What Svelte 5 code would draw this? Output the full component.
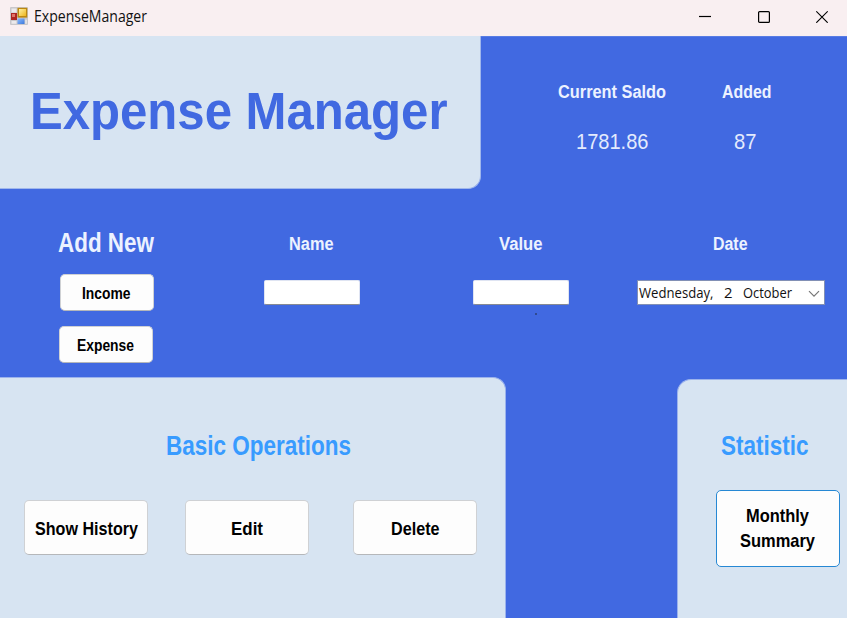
<script>
  const operations = [
    { text: 'Show History', width: 103, offset: 0 },
    { text: 'Edit', width: 32, offset: -1 },
    { text: 'Delete', width: 48.5, offset: -0.5 }
  ];
</script>

{#snippet label(text, width, size, height, baseline, kind)}
  <svg class="label {kind}" {width} {height} aria-label={text}>
    <text x="0" y={baseline} font-size={size} textLength={width} lengthAdjust="spacingAndGlyphs">{text}</text>
  </svg>
{/snippet}

<div class="window">
  <header class="titlebar">
    <svg class="appicon" width="18" height="18" viewBox="0 0 18 18">
      <defs>
        <linearGradient id="gold" x2="1" y2="1"><stop stop-color="#fff0a0" /><stop offset="1" stop-color="#eeb51c" /></linearGradient>
        <linearGradient id="sky" x2="1" y2="1"><stop stop-color="#8cbcff" /><stop offset="1" stop-color="#3c78dc" /></linearGradient>
      </defs>
      <rect width="18" height="18" rx="1" fill="#c9c7ca" />
      <path d="M1.5 1.5h5v4h-5zM1.5 14h5v2.7h-5zM15.3 12.7h1.5v4h-1.5z" fill="#eceaec" />
      <rect x="1" y="6" width="6" height="7" fill="#ad2622" />
      <rect x="2" y="7" width="3" height="3" fill="#df7468" />
      <rect x="7.5" y=".8" width="9.8" height="9.8" fill="#bd8710" />
      <rect x="9" y="2" width="7" height="7" fill="url(#gold)" />
      <rect x="7.5" y="11.5" width="7" height="5.5" fill="url(#sky)" />
    </svg>
    {@render label('ExpenseManager', 113, 15.4, 24, 16, 'system')}
    <div class="controls">
      <svg width="12" height="13" viewBox="0 0 12 13"><path d="M0 6.5h12" /></svg>
      <svg width="12" height="13" viewBox="0 0 12 13"><rect x=".6" y="1.6" width="10.8" height="10.8" rx="1" /></svg>
      <svg width="12" height="13" viewBox="0 0 12 13"><path d="M.3 1.3l11.4 11.4M11.7 1.3L.3 12.7" /></svg>
    </div>
  </header>

  <section class="hero">
    <div class="brand">{@render label('Expense Manager', 417.5, 51, 60, 48, 'bold royal')}</div>
    <div class="summary-top">
      <div class="stat saldo">
        {@render label('Current Saldo', 108, 18.7, 26, 18, 'bold pale')}
        {@render label('1781.86', 72.5, 21.3, 28, 20.5, 'thin')}
      </div>
      <div class="stat added">
        {@render label('Added', 49.5, 18.7, 26, 18, 'bold pale')}
        {@render label('87', 22.5, 21.3, 28, 20.5, 'thin')}
      </div>
    </div>
  </section>

  <section class="entry">
    <div class="add">
      {@render label('Add New', 96, 26.8, 32, 23, 'bold pale')}
      <button class="small income">{@render label('Income', 48.5, 16.4, 22, 16.5, 'bold')}</button>
      <button class="small">{@render label('Expense', 57, 16.4, 22, 16.5, 'bold')}</button>
    </div>
    <div class="field name">
      {@render label('Name', 44.5, 18, 24, 17.7, 'bold pale')}
      <input aria-label="Name" />
    </div>
    <div class="field value">
      {@render label('Value', 43.5, 18, 24, 17.7, 'bold pale')}
      <input aria-label="Value" />
      <i class="mark"></i>
    </div>
    <div class="field date">
      {@render label('Date', 34.5, 18, 24, 17.7, 'bold pale')}
      <div class="picker">
        {@render label('Wednesday,', 74.5, 15.2, 22, 16.5, 'system')}
        {@render label('2', 8.5, 15.2, 22, 16.5, 'system')}
        {@render label('October', 49, 15.2, 22, 16.5, 'system')}
        <svg class="chevron" width="12" height="8" viewBox="0 0 12 8"><path d="M1 1.2l5 5 5-5" /></svg>
      </div>
    </div>
  </section>

  <section class="bottom">
    <div class="panel ops">
      {@render label('Basic Operations', 185, 26.8, 34, 25, 'bold dodger')}
      <div class="buttons">
        {#each operations as op}
          <button class="large" style="--shift: {op.offset}px">{@render label(op.text, op.width, 18.5, 24, 18.7, 'bold')}</button>
        {/each}
      </div>
    </div>
    <div class="panel statistic">
      {@render label('Statistic', 87.5, 26.8, 34, 25, 'bold dodger')}
      <button class="summary">
        {@render label('Monthly', 63, 18.5, 25, 18.2, 'bold')}
        {@render label('Summary', 75, 18.5, 25, 18.2, 'bold')}
      </button>
    </div>
  </section>
</div>

<style>
  :global(body) { margin: 0; overflow: hidden; }
  * { box-sizing: border-box; }
  .window {
    width: 847px;
    height: 618px;
    display: flex;
    flex-direction: column;
    background: #4169e1;
    overflow: hidden;
  }
  svg { display: block; flex: none; }
  .label { overflow: visible; fill: #000; font-family: "Liberation Sans", Arial, sans-serif; }
  .bold { font-weight: 700; }
  .pale { fill: #ecf2ff; }
  .thin { fill: #e4ebfd; }
  .royal { fill: #4169e1; }
  .dodger { fill: #389bff; }
  .system { font-family: "Open Sans", "Noto Sans", sans-serif; fill: #111; }

  .titlebar {
    height: 36px;
    flex: none;
    display: flex;
    align-items: flex-start;
    background: #f9eff1;
    padding: 7px 19px 0 10px;
  }
  .titlebar .label { margin: -1px 0 0 5.5px; }
  .controls { margin: 3px 0 0 auto; display: flex; gap: 46.5px; }
  .controls svg { fill: none; stroke: #000; stroke-width: 1.2; }

  .hero { height: 153px; flex: none; display: flex; }
  .brand {
    width: 481px;
    height: 153px;
    padding: 44.5px 0 0 29.5px;
    background: #d7e4f2;
    border: solid #a0b7ec;
    border-width: 0 1px 1px 0;
    border-bottom-right-radius: 13px;
  }
  .summary-top { flex: 1; display: flex; border-top: 1px solid #587ce4; }
  .stat { display: flex; flex-direction: column; align-items: center; gap: 22px; padding-top: 43px; }
  .saldo { margin: 0 56px 0 76.5px; }
  .saldo .thin { margin-left: 1px; }
  .added .thin { margin-right: 2.5px; }

  .entry { height: 188px; flex: none; display: flex; }
  .add { width: 264px; padding: 40px 0 0 58px; }
  button { font: inherit; padding: 0; background: #fdfdfd; border: 1px solid #cfd1d4; border-bottom-color: #b5b7ba; border-radius: 5px; display: flex; align-items: center; justify-content: center; }
  .small { width: 94px; height: 37px; margin: 15px 0 0 1px; }
  .small .label { margin-left: -2px; }
  .income { margin: 13px 0 0 2px; }
  .field { display: flex; flex-direction: column; align-items: center; padding-top: 43px; }
  .field > .label { margin-left: -1.5px; }
  .name { width: 96px; }
  .value { width: 96px; margin-left: 113px; }
  .date { width: 188px; margin-left: 68px; }
  input { width: 96px; height: 25px; margin-top: 24px; padding: 0 4px; background: #fff; border: 1px solid #dfe4f2; border-bottom-color: #868a94; border-radius: 2px; outline: none; }
  .mark { width: 2px; height: 2px; margin: 8px 0 0 29px; background: #304a91; }
  .picker { width: 188px; height: 25px; margin-top: 24px; display: flex; background: #fff; border: 1px solid #8290b5; padding-left: 1px; }
  .picker .label + .label { margin-left: 10.5px; }
  .picker .chevron { margin: 9px 0 0 16px; fill: none; stroke: #777; stroke-width: 1.2; }

  .bottom { flex: 1; display: flex; justify-content: space-between; }
  .panel { background: #d7e4f2; border: 0 solid #9cb3ec; }
  .ops { width: 506px; padding: 52px 0 0 24px; border-width: 1px 1px 0 0; border-top-right-radius: 13px; }
  .ops > .label { margin-left: 142px; }
  .buttons { display: flex; margin-top: 36px; }
  .large { width: 124px; height: 55px; }
  .large:nth-child(2) { margin-left: 37px; }
  .large:nth-child(3) { margin-left: 44px; }
  .large .label { margin-left: var(--shift); }
  .statistic { width: 170px; margin-top: 2px; padding: 50px 0 0 37.5px; border-width: 1px 0 0 1px; border-top-left-radius: 14px; }
  .statistic > .label { margin-left: 5px; }
  .summary { flex-direction: column; width: 124px; height: 77px; margin-top: 26px; border-color: #2688d4; }
  .summary .label { margin-left: -1px; }
</style>
